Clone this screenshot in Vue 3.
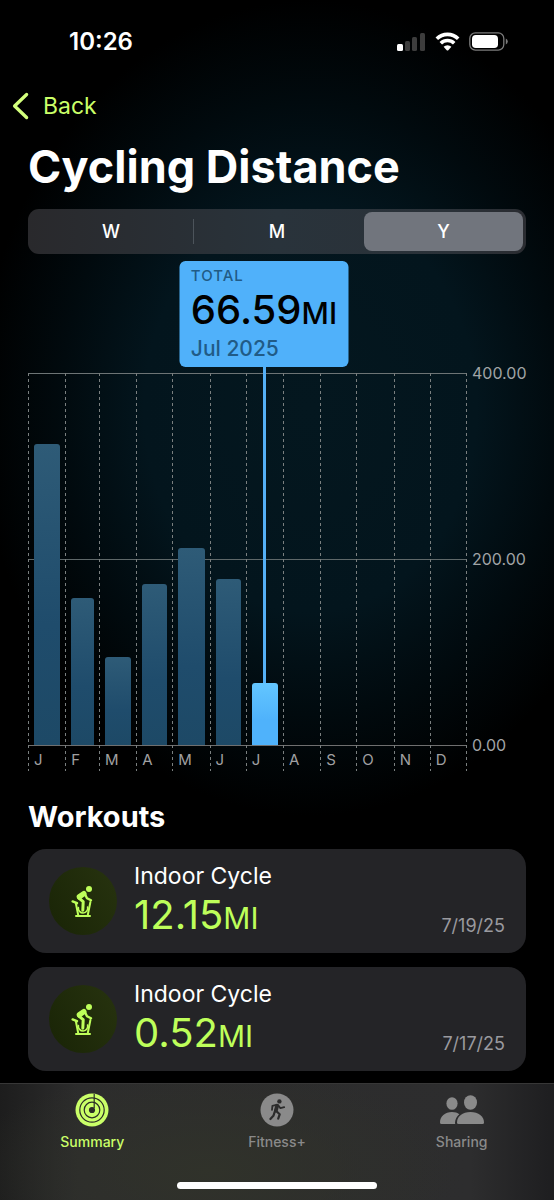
<script setup>
import { ref, computed } from 'vue'

// --- chart data ---
const AXIS_MAX = 400
const ticks = ['400.00', '200.00', '0.00']

const months = ref([
  { id: 'Jan', label: 'J', days: 31, miles: 323.7 },
  { id: 'Feb', label: 'F', days: 28, miles: 158 },
  { id: 'Mar', label: 'M', days: 31, miles: 94.6 },
  { id: 'Apr', label: 'A', days: 30, miles: 173.6 },
  { id: 'May', label: 'M', days: 31, miles: 211.5 },
  { id: 'Jun', label: 'J', days: 30, miles: 178.5 },
  { id: 'Jul', label: 'J', days: 31, miles: 66.59 },
  { id: 'Aug', label: 'A', days: 31, miles: 0 },
  { id: 'Sep', label: 'S', days: 30, miles: 0 },
  { id: 'Oct', label: 'O', days: 31, miles: 0 },
  { id: 'Nov', label: 'N', days: 30, miles: 0 },
  { id: 'Dec', label: 'D', days: 31, miles: 0 }
])

// columns are as wide as their month is long
const columns = computed(() => months.value.map(m => `${m.days}fr`).join(' '))
const barHeight = (m) => `${(m.miles / AXIS_MAX) * 100}%`

// --- state ---
const ranges = ['W', 'M', 'Y']
const range = ref('Y')
const selected = ref('Jul')
const activeTab = ref('Summary')

const workouts = ref([
  { id: 1, name: 'Indoor Cycle', distance: '12.15', date: '7/19/25' },
  { id: 2, name: 'Indoor Cycle', distance: '0.52', date: '7/17/25' }
])

const tabs = ['Summary', 'Fitness+', 'Sharing']
</script>

<template>
  <div class="screen">
    <div class="status-bar">
      <span class="clock">10:26</span>
      <div class="status-icons">
        <svg width="29" height="19" viewBox="0 0 29 19">
          <rect x="0" y="12" width="6" height="7" rx="1.5" fill="#fff" />
          <rect x="8" y="9" width="5" height="10" rx="1.5" fill="#3d3d3d" />
          <rect x="15" y="5" width="5" height="14" rx="1.5" fill="#3d3d3d" />
          <rect x="23" y="1" width="5" height="18" rx="1.5" fill="#3d3d3d" />
        </svg>
        <svg width="25" height="19" viewBox="0 0 25 19">
          <g fill="none" stroke="#fff" stroke-width="3.6">
            <path d="M1.8 6.8a15.2 15.2 0 0 1 21.4 0" />
            <path d="M5.8 11.2a9.6 9.6 0 0 1 13.4 0" />
          </g>
          <path d="M8.6 14.8a5.6 5.6 0 0 1 7.8 0l-3.1 3.4q-.8.8-1.6 0z" fill="#fff" />
        </svg>
        <svg width="39" height="19" viewBox="0 0 39 19">
          <rect x="0.8" y="0.8" width="34" height="17.4" rx="5.6" fill="none" stroke="#7b7b7b" stroke-width="1.3" />
          <rect x="3" y="3" width="26" height="13" rx="3.8" fill="#fff" />
          <path d="M36.8 6.5q2 1 2 3t-2 3z" fill="#7b7b7b" />
        </svg>
      </div>
    </div>

    <nav class="nav-bar">
      <button type="button" class="back-btn">
        <svg width="18" height="28" viewBox="0 0 18 28">
          <path d="M14.6 2.5L2.6 14l12 11.5" fill="none" stroke="#d3ff7c" stroke-width="3.3" stroke-linecap="round" stroke-linejoin="round" />
        </svg>
        <span>Back</span>
      </button>
    </nav>

    <main class="content">
      <h1>Cycling Distance</h1>

      <div class="segmented">
        <button
          v-for="r in ranges"
          :key="r"
          type="button"
          class="segment"
          :class="{ active: range === r }"
          :aria-pressed="range === r"
          @click="range = r"
        >{{ r }}</button>
      </div>

      <div class="chart">
        <div class="plot" :style="{ gridTemplateColumns: columns }">
          <div v-for="m in months" :key="m.id" class="column" @click="selected = m.id">
            <div class="track">
              <div
                v-if="m.miles > 0"
                class="bar"
                :class="{ active: selected === m.id }"
                :style="{ height: barHeight(m) }"
              ></div>
              <template v-if="selected === m.id">
                <div class="marker" :style="{ bottom: barHeight(m) }"></div>
                <div class="callout">
                  <span class="callout-title">TOTAL</span>
                  <span class="callout-value">{{ m.miles.toFixed(2) }}<small>MI</small></span>
                  <span class="callout-date">{{ m.id }} 2025</span>
                </div>
              </template>
            </div>
            <span class="month">{{ m.label }}</span>
          </div>
        </div>
        <div class="axis">
          <span v-for="t in ticks" :key="t">{{ t }}</span>
        </div>
      </div>

      <h2>Workouts</h2>

      <ul class="workouts">
        <li v-for="w in workouts" :key="w.id" class="card">
          <div class="badge">
            <svg width="24" height="34" viewBox="0 0 24 34">
              <circle cx="18" cy="5" r="3" fill="#beff5a" />
              <g fill="none" stroke="#beff5a" stroke-linecap="round" stroke-linejoin="round">
                <path d="M12.8 9.6L8.4 12.8" stroke-width="5.4" />
                <path d="M13.4 9l2.6 5.2 4 2" stroke-width="2.4" />
                <path d="M7.8 14l4.4 3.6-.4 8.6" stroke-width="3" />
                <path d="M1.6 17.4l4.4 1.8" stroke-width="2.4" />
                <path d="M4.8 19l2.4 12M19.4 18l-2.6 13" stroke-width="2" />
                <path d="M7.4 23.5a4.7 4.7 0 1 0 9.2-.4" stroke-width="1.6" />
                <path d="M5 32h14" stroke-width="2" />
              </g>
            </svg>
          </div>
          <div class="info">
            <span class="name">{{ w.name }}</span>
            <span class="distance">{{ w.distance }}<small>MI</small></span>
          </div>
          <span class="date">{{ w.date }}</span>
        </li>
      </ul>
    </main>

    <footer class="tab-bar">
      <div class="tabs">
        <button
          v-for="t in tabs"
          :key="t"
          type="button"
          class="tab"
          :class="{ active: activeTab === t }"
          @click="activeTab = t"
        >
          <!-- rings -->
          <svg v-if="t === 'Summary'" width="34" height="34" viewBox="0 0 34 34">
            <circle cx="17" cy="17" r="16.5" fill="currentColor" />
            <g fill="none" stroke="#2b2c27" stroke-width="1.2">
              <circle cx="17" cy="17" r="12.2" />
              <circle cx="17" cy="17" r="7.8" />
              <path d="M19.2 1v14" />
            </g>
            <circle cx="17" cy="17" r="3.1" fill="#2b2c27" />
          </svg>
          <!-- runner -->
          <svg v-else-if="t === 'Fitness+'" width="34" height="34" viewBox="0 0 34 34">
            <circle cx="17" cy="17" r="16.5" fill="currentColor" />
            <circle cx="19.4" cy="8.4" r="2.2" fill="#2c2c2c" />
            <g fill="none" stroke="#2c2c2c" stroke-linecap="round" stroke-linejoin="round">
              <path d="M17.2 12.8l-1.4 4.8" stroke-width="3.8" />
              <path d="M16.4 11.8l-4 1-.4 4" stroke-width="1.8" />
              <path d="M18.4 12.4l2 2.8 3.8-1" stroke-width="1.8" />
              <path d="M16.5 18.3l3.2 3-1.5 4.4" stroke-width="2.2" />
              <path d="M14.8 18.6l-1.4 4.2-3 3.2" stroke-width="2.2" />
            </g>
          </svg>
          <!-- two people -->
          <svg v-else width="44" height="34" viewBox="0 0 44 34">
            <g fill="currentColor">
              <ellipse cx="12" cy="10.5" rx="5.6" ry="6.3" />
              <path d="M0 29.5C0 23.5 5 19 12 19c3 0 5.5.8 7.3 2.2-2.6 2.1-4.1 5-4.3 8.3q0 1 .3 1.5H1.5Q0 31 0 29.5z" />
              <ellipse cx="30.5" cy="9.5" rx="6.5" ry="7.3" />
              <path d="M17 29.5C17 23.5 22.5 19 30.5 19S44 23.5 44 29.5q0 1.5-1.5 1.5h-24Q17 31 17 29.5z" />
            </g>
          </svg>
          <span>{{ t }}</span>
        </button>
      </div>
      <div class="home-indicator"></div>
    </footer>
  </div>
</template>

<style>
body {
  margin: 0;
  background: #000;
}
</style>

<style scoped>
.screen {
  display: flex;
  flex-direction: column;
  min-height: 100vh;
  box-sizing: border-box;
  color: #fff;
  font-family: Inter, Roboto, "Liberation Sans", sans-serif;
  background: radial-gradient(ellipse 60% 34% at 56% 34%, #04171f 0%, #03151d 50%, #010a0e 75%, #000 100%) #000;
}

button {
  padding: 0;
  border: none;
  background: none;
  color: inherit;
  font-family: inherit;
  cursor: pointer;
}

/* status bar */
.status-bar {
  display: flex;
  align-items: center;
  justify-content: space-between;
  height: 82px;
  padding: 0 46px 0 69px;
}

.clock {
  font-size: 24px;
  font-weight: 600;
}

.status-icons {
  display: flex;
  align-items: center;
  gap: 9px;
}

.nav-bar {
  display: flex;
  height: 48px;
  padding: 0 12px;
}

.back-btn {
  display: flex;
  align-items: center;
  gap: 13px;
  color: #caff68;
  font-size: 23px;
}

.content {
  padding: 0 28px;
}

h1 {
  margin: 8px 0 14px;
  font-size: 45px;
  line-height: 57px;
  font-weight: 700;
}

/* W / M / Y switch */
.segmented {
  display: grid;
  grid-template-columns: repeat(3, 1fr);
  height: 45px;
  border-radius: 11px;
  background: linear-gradient(90deg, #29292c, #29333b 50%, #2a3138 85%, #2a2c31);
}

.segment {
  position: relative;
  border-radius: 8px;
  font-size: 18px;
  font-weight: 500;
}

.segment.active {
  margin: 3px 3px 3px 4px;
  background: #71757d;
}

.segment:first-child:not(.active)::after {
  content: "";
  position: absolute;
  top: 10px;
  bottom: 10px;
  right: 0;
  width: 1px;
  background: #4c545b;
}

/* chart */
.chart {
  display: flex;
  margin-top: 119px;
}

.plot {
  display: grid;
  flex: 1;
  background:
    linear-gradient(#6d7475, #6d7475) 0 0 / 100% 1px no-repeat,
    linear-gradient(#5f6869, #5f6869) 0 186px / 100% 1px no-repeat,
    linear-gradient(#6f6f6f, #6f6f6f) 0 372px / 100% 1px no-repeat;
}

.column {
  background: repeating-linear-gradient(#7a7f7f 0 3px, transparent 3px 6px) 0 0 / 1px 100% no-repeat;
}

.column:last-child {
  background:
    repeating-linear-gradient(#7a7f7f 0 3px, transparent 3px 6px) 0 0 / 1px 100% no-repeat,
    repeating-linear-gradient(#7a7f7f 0 3px, transparent 3px 6px) 100% 0 / 1px 100% no-repeat;
}

.track {
  position: relative;
  display: flex;
  align-items: flex-end;
  height: 372px;
  padding: 0 5px 0 6px;
}

.bar {
  flex: 1;
  border-radius: 3px 3px 0 0;
  background: linear-gradient(#2e5b77, #1f4c6c 60%, #1d4966);
}

.bar.active {
  background: linear-gradient(#63c6ff, #4fb2fb 60%);
}

.marker {
  position: absolute;
  top: -6px;
  left: 50%;
  width: 3px;
  margin-left: -1px;
  background: #55b0f6;
}

.callout {
  position: absolute;
  bottom: calc(100% + 6px);
  left: 50%;
  display: flex;
  flex-direction: column;
  width: 169px;
  height: 106px;
  padding: 5px 11px;
  box-sizing: border-box;
  border-radius: 6px;
  transform: translateX(-50%);
  background: #50b1fa;
  color: #000;
  white-space: nowrap;
}

.callout-title {
  font-size: 15px;
  line-height: 20px;
  font-weight: 500;
  letter-spacing: 1px;
  color: #215b86;
}

.callout-value {
  font-size: 40px;
  line-height: 48px;
  font-weight: 500;
}

.callout-value small {
  font-size: 30px;
}

.callout-date {
  font-size: 21px;
  line-height: 24px;
  font-weight: 500;
  color: #215b86;
}

.month {
  display: block;
  padding: 6px 0 2px 6px;
  font-size: 15px;
  line-height: 18px;
  color: #a0a0a2;
}

.axis {
  display: flex;
  flex-direction: column;
  justify-content: space-between;
  width: 54px;
  height: 392px;
  margin-top: -10px;
  padding-left: 5px;
  font-size: 16px;
  line-height: 20px;
  color: #a0a4a6;
}

/* workouts */
h2 {
  margin: 28px 0 14px;
  font-size: 29px;
  line-height: 36px;
  font-weight: 700;
}

.workouts {
  display: flex;
  flex-direction: column;
  gap: 14px;
  margin: 0 0 12px;
  padding: 0;
  list-style: none;
}

.card {
  display: flex;
  align-items: center;
  height: 104px;
  padding: 0 21px;
  box-sizing: border-box;
  border-radius: 18px;
  background: #242427;
}

.badge {
  display: flex;
  align-items: center;
  justify-content: center;
  width: 68px;
  height: 68px;
  border-radius: 50%;
  background: linear-gradient(60deg, #192406, #27330f);
}

.info {
  display: flex;
  flex: 1;
  flex-direction: column;
  margin-left: 17px;
}

.name {
  font-size: 23px;
  line-height: 30px;
}

.distance {
  font-size: 40px;
  line-height: 48px;
  color: #beff5a;
}

.distance small {
  font-size: 30px;
}

.date {
  align-self: flex-end;
  margin-bottom: 15px;
  font-size: 18px;
  line-height: 24px;
  color: #9a9a9f;
}

/* tab bar */
.tab-bar {
  position: sticky;
  bottom: 0;
  margin-top: auto;
  border-top: 1px solid #373737;
  background:
    radial-gradient(ellipse 45% 90% at 38% 75%, #30322a, transparent),
    linear-gradient(90deg, #1d1d1d, #2c2c2c 14%, #2d2d2e 85%, #1e1e20);
}

.tabs {
  display: grid;
  grid-template-columns: repeat(3, 1fr);
  height: 98px;
}

.tab {
  display: flex;
  flex-direction: column;
  align-items: center;
  gap: 6px;
  padding-top: 9px;
  color: #8a8a8a;
  font-size: 14px;
  line-height: 18px;
  font-weight: 500;
}

.tab.active {
  color: #caff68;
}

.home-indicator {
  width: 36%;
  height: 7px;
  margin: 0 auto 11px;
  border-radius: 4px;
  background: #fff;
}
</style>
